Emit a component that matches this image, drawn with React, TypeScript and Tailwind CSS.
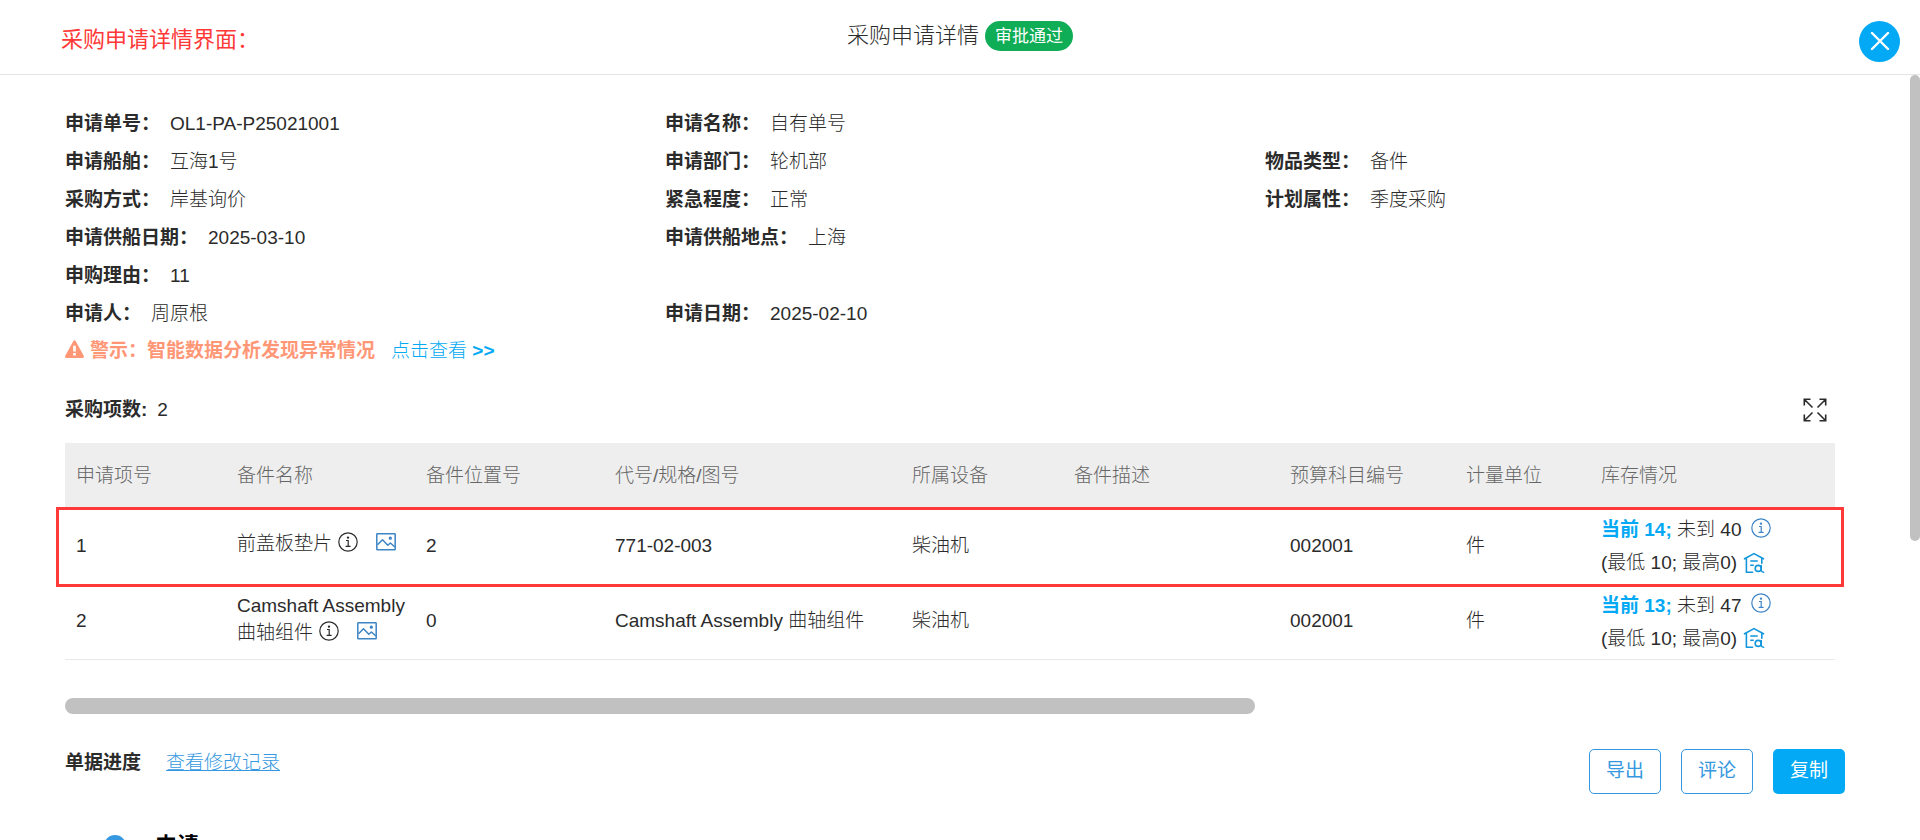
import React from "react";

type Field = { label: string; value: string; col: string };

const fields: Field[][] = [
  [
    { label: "申请单号：", value: "OL1-PA-P25021001", col: "col-start-1" },
    { label: "申请名称：", value: "自有单号", col: "col-start-2" },
  ],
  [
    { label: "申请船舶：", value: "互海1号", col: "col-start-1" },
    { label: "申请部门：", value: "轮机部", col: "col-start-2" },
    { label: "物品类型：", value: "备件", col: "col-start-3" },
  ],
  [
    { label: "采购方式：", value: "岸基询价", col: "col-start-1" },
    { label: "紧急程度：", value: "正常", col: "col-start-2" },
    { label: "计划属性：", value: "季度采购", col: "col-start-3" },
  ],
  [
    { label: "申请供船日期：", value: "2025-03-10", col: "col-start-1" },
    { label: "申请供船地点：", value: "上海", col: "col-start-2" },
  ],
  [{ label: "申购理由：", value: "11", col: "col-start-1" }],
  [
    { label: "申请人：", value: "周原根", col: "col-start-1" },
    { label: "申请日期：", value: "2025-02-10", col: "col-start-2" },
  ],
];

const columns = [
  { title: "申请项号", width: "w-[161px]" },
  { title: "备件名称", width: "w-[189px]" },
  { title: "备件位置号", width: "w-[189px]" },
  { title: "代号/规格/图号", width: "w-[297px]" },
  { title: "所属设备", width: "w-[162px]" },
  { title: "备件描述", width: "w-[216px]" },
  { title: "预算科目编号", width: "w-[176px]" },
  { title: "计量单位", width: "w-[135px]" },
  { title: "库存情况", width: "" },
];

const items = [
  { no: 1, name: "前盖板垫片", position: "2", code: "771-02-003", device: "柴油机", budget: "002001", unit: "件", current: 14, pending: 40 },
  { no: 2, name: "Camshaft Assembly 曲轴组件", position: "0", code: "Camshaft Assembly 曲轴组件", device: "柴油机", budget: "002001", unit: "件", current: 13, pending: 47 },
];

function InfoIcon() {
  return (
    <svg className="size-5" viewBox="0 0 20 20" fill="none" stroke="currentColor" strokeWidth="1.2" aria-hidden="true">
      <circle cx="10" cy="10" r="9.2" />
      <path d="M8 8.500h2.200v5.800M7.600 14.300h5" />
      <circle cx="10" cy="5.600" r="0.600" fill="currentColor" />
    </svg>
  );
}

function PictureIcon() {
  return (
    <svg className="size-5" viewBox="0 0 20 20" fill="none" stroke="currentColor" strokeWidth="1.5" strokeLinejoin="round" aria-hidden="true">
      <rect x="0.8" y="1.8" width="18.4" height="16" rx="0.6" />
      <path d="m1.500 12.800 5-5 5.300 5.500 2.600-2.300 4.500 4" />
      <circle cx="14.300" cy="6.200" r="0.900" fill="currentColor" />
    </svg>
  );
}

function WarehouseIcon() {
  return (
    <svg className="size-[22px]" viewBox="0 0 22 22" fill="none" stroke="currentColor" strokeWidth="1.6" strokeLinecap="round" strokeLinejoin="round" aria-hidden="true">
      <path d="M1.500 6.800 11 1.600l9.500 5.200M18.800 6.800v4.400M3.400 6.800v13.400h6.200M7.800 9h6.400M7.800 13.200h2.400" />
      <circle cx="15.200" cy="16.400" r="3" />
      <path d="M18.200 13.600v4.800q.4 1.800 2.400 1.800" />
    </svg>
  );
}

function ExpandIcon() {
  return (
    <svg className="size-6" viewBox="0 0 24 24" fill="none" stroke="currentColor" strokeWidth="1.600" aria-hidden="true">
      <path d="M1.300 7.500V1.300H7.500M1.500 1.500l8 8M16.500 1.300h6.200V7.500M22.500 1.500l-8 8M1.300 16.500v6.200H7.500M1.500 22.500l8-8M16.500 22.700h6.200V16.500M22.500 22.500l-8-8" />
    </svg>
  );
}

export default function App() {
  return (
    <div className="relative h-screen overflow-hidden bg-white font-['Liberation_Sans','Noto_Sans_CJK_SC',sans-serif] text-[19px] font-light text-[#2b2b2b]">
      <header className="grid h-[75px] grid-cols-[1fr_auto_1fr] items-start border-b border-[#e4e4e4] px-5">
        <p className="pt-6 pl-[41px] text-[22px] leading-8 font-normal text-[#ff3838]">采购申请详情界面：</p>
        <div className="flex items-center gap-1.5 pt-5">
          <h1 className="text-[22px] leading-8">采购申请详情</h1>
          <span className="rounded-[15px] bg-[#10ad57] px-[10px] pt-0.5 text-[17px] leading-7 font-normal text-white">审批通过</span>
        </div>
        <button aria-label="关闭" className="mt-[21px] flex size-[41px] items-center justify-center justify-self-end rounded-full bg-[#03a9f4] text-white">
          <svg className="size-5" viewBox="0 0 20 20" fill="none" stroke="currentColor" strokeWidth="2.400" strokeLinecap="round" aria-hidden="true">
            <path d="m2 1 16 16M18 1 2 17" />
          </svg>
        </button>
      </header>

      <main className="pt-[30px] pr-[85px] pl-[65px]">
        <dl className="-mr-[30px]">
          {fields.map((row, i) => (
            <div key={i} className="grid grid-cols-3 leading-[38px]">
              {row.map((f) => (
                <div key={f.label} className={`flex gap-[10px] ${f.col}`}>
                  <dt className="font-bold">{f.label}</dt>
                  <dd>{f.value}</dd>
                </div>
              ))}
            </div>
          ))}
        </dl>

        <div className="flex items-center leading-9">
          <svg className="mr-1.5 mb-1 size-[19px] text-[#ff9777]" viewBox="0 0 20 20" fill="currentColor" aria-hidden="true">
            <path fillRule="evenodd" d="M8.700 1.300Q10-.6 11.300 1.300l8.400 15.300q.8 2.400-1.400 2.400H1.700Q-.5 19 .3 16.600ZM8.600 6v6h2.800V6ZM8.600 13.800v2.600h2.800v-2.600Z" />
          </svg>
          <strong className="font-bold text-[#ff9777]">警示：智能数据分析发现异常情况</strong>
          <a href="#analysis" className="ml-4 text-[#03a9f4]">
            点击查看 <span className="font-bold">&gt;&gt;</span>
          </a>
        </div>

        <section className="pt-[22px]">
          <div className="flex items-center justify-between pr-2">
            <p className="flex gap-[10px] leading-[38px]">
              <span className="font-bold">采购项数:</span>
              <span>2</span>
            </p>
            <button aria-label="全屏">
              <ExpandIcon />
            </button>
          </div>

          <div className="relative mt-[14px]">
            <table className="w-full table-fixed text-left">
              <thead>
                <tr className="h-[66px] bg-[#eee] text-[#666]">
                  {columns.map((c) => (
                    <th key={c.title} scope="col" className={`${c.width} px-[11px] font-light`}>
                      {c.title}
                    </th>
                  ))}
                </tr>
              </thead>
              <tbody>
                {items.map((it) => (
                  <tr key={it.no} className="h-[75px] border-b border-[#e8e8e8]">
                    <td className="px-[11px]">{it.no}</td>
                    <td className="pb-1.5 pl-[11px] leading-[27px]">
                      {it.name}
                      <button aria-label="备件详情" className="ml-1.5 h-5 align-[-2px]">
                        <InfoIcon />
                      </button>
                      <button aria-label="查看图片" className="ml-[18px] h-5 align-[-2px] text-[#3d85c6]">
                        <PictureIcon />
                      </button>
                    </td>
                    <td className="px-[11px]">{it.position}</td>
                    <td className="px-[11px]">{it.code}</td>
                    <td className="px-[11px]">{it.device}</td>
                    <td className="px-[11px]" />
                    <td className="px-[11px]">{it.budget}</td>
                    <td className="px-[11px]">{it.unit}</td>
                    <td className="px-[11px] leading-[33px]">
                      <div className="flex items-center">
                        <p>
                          <strong className="font-bold text-[#03a9f4]">当前 {it.current};</strong> 未到 {it.pending}
                        </p>
                        <button aria-label="库存说明" className="mb-1 ml-[10px] text-[#3d85c6]">
                          <InfoIcon />
                        </button>
                      </div>
                      <div className="flex items-center">
                        <p>(最低 10; 最高0)</p>
                        <button aria-label="查询仓库" className="ml-1.5 text-[#1296db]">
                          <WarehouseIcon />
                        </button>
                      </div>
                    </td>
                  </tr>
                ))}
              </tbody>
            </table>
            <div className="pointer-events-none absolute top-16 -right-[9px] -left-[9px] h-20 border-3 border-[#ff3838]" />
          </div>
          <div className="mt-[38px] h-4 w-[1190px] rounded-lg bg-[#c1c1c1]" />
        </section>

        <section className="-mr-2.5 flex items-start justify-between pt-[35px]">
          <div className="flex gap-[25px] leading-7">
            <h2 className="font-bold">单据进度</h2>
            <a href="#history" className="text-[#3598e0] underline">查看修改记录</a>
          </div>
          <div className="flex gap-5">
            <button className="h-[45px] w-[72px] rounded-[5px] border border-[#3598e0] font-normal text-[#3598e0]">导出</button>
            <button className="h-[45px] w-[72px] rounded-[5px] border border-[#3598e0] font-normal text-[#3598e0]">评论</button>
            <button className="h-[45px] w-[72px] rounded-[5px] bg-[#03a9f4] font-normal text-white">复制</button>
          </div>
        </section>

        <div className="flex items-center gap-[29px] pt-[36px] pl-[39px]">
          <span className="size-[22px] rounded-full bg-[#3598e0]" />
          <h3 className="text-[22px] leading-8 font-bold text-black">申请</h3>
        </div>
      </main>

      <div className="absolute top-[75px] right-0 h-[466px] w-2.5 rounded-full bg-[#c1c1c1]" />
    </div>
  );
}
